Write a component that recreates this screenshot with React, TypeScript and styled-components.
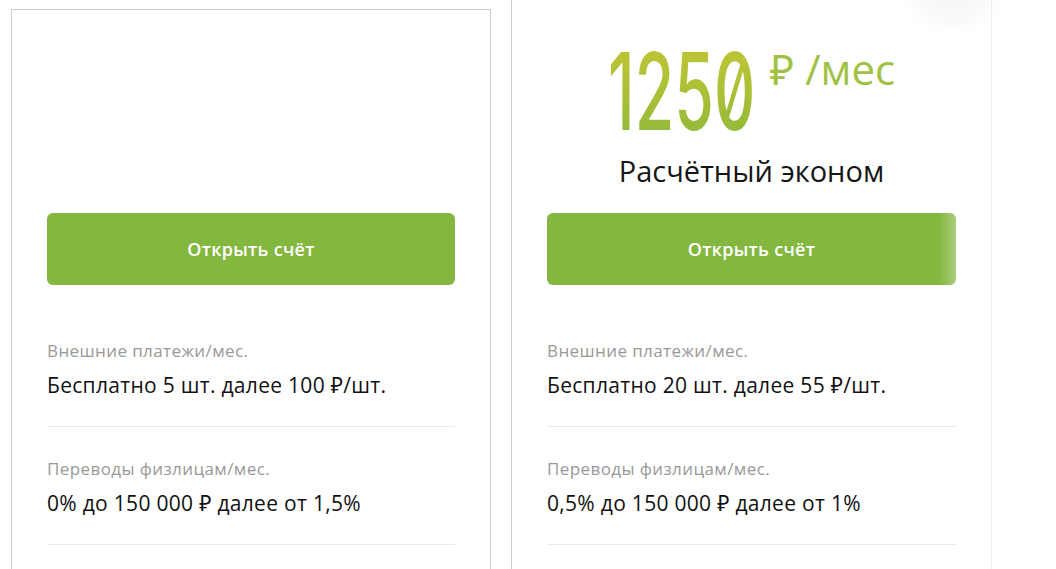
import React from "react";
import styled, { createGlobalStyle } from "styled-components";

const GlobalStyle = createGlobalStyle`
  html, body {
    margin: 0;
    padding: 0;
    background: #ffffff;
  }
  body {
    font-family: "Open Sans", "Noto Sans", "Liberation Sans", sans-serif;
    color: #111111;
  }
  * { box-sizing: border-box; }
`;

const Page = styled.div`
  position: relative;
  width: 1056px;
  height: 569px;
  overflow: hidden;
  background: #ffffff;
`;

const Cards = styled.div`
  display: flex;
  align-items: flex-start;
  gap: 20px;
  padding-left: 11px;
`;

const Card = styled.section<{ $active?: boolean }>`
  width: ${(p) => (p.$active ? 481 : 480)}px;
  padding: 0 35px 40px;
  border: 1px solid #cdcdcd;
  background: #ffffff;
  margin-top: ${(p) => (p.$active ? 0 : 9)}px;
  ${(p) =>
    p.$active &&
    `
    border-top: 0;
    border-right-color: #f1f1f1;
    padding-top: 10px;
  `}
`;

const Header = styled.header`
  height: 203px;
  padding-top: 28px;
  display: flex;
  flex-direction: column;
  align-items: center;
`;

const PriceLine = styled.div`
  display: flex;
  align-items: flex-start;
  justify-content: center;
  gap: 21px;
`;

const Amount = styled.span`
  display: inline-block;
  width: 141px;
  height: 107px;
  white-space: nowrap;
`;

const AmountGlyphs = styled.span`
  display: inline-block;
  font-family: "Inter", "Liberation Sans", sans-serif;
  font-size: 107px;
  line-height: 107px;
  font-weight: 500;
  font-feature-settings: "zero" 1;
  letter-spacing: 0;
  transform: scaleX(0.6);
  transform-origin: left top;
  background: linear-gradient(180deg, #c3c535 0%, #abc036 50%, #8db83b 100%);
  -webkit-background-clip: text;
  background-clip: text;
  color: transparent;
`;

const Period = styled.span`
  margin-top: 3px;
  font-size: 42px;
  line-height: 56px;
  color: #9fc244;
  white-space: nowrap;
`;

const PlanName = styled.h2`
  margin: 8px 0 0;
  font-size: 29px;
  line-height: 36px;
  font-weight: 400;
  color: #161616;
`;

const OpenButton = styled.button<{ $faded?: boolean }>`
  display: flex;
  align-items: center;
  justify-content: center;
  width: 100%;
  height: 72px;
  border: 0;
  border-radius: 6px;
  margin: 0 0 24px;
  padding: 0;
  font-family: inherit;
  font-size: 18px;
  font-weight: 600;
  letter-spacing: 0.3px;
  color: #ffffff;
  cursor: pointer;
  background: ${(p) =>
    p.$faded
      ? "linear-gradient(90deg, #84b740 0%, #84b740 calc(100% - 17px), #8bbb4a calc(100% - 14px), #aacd7e 100%)"
      : "#84b740"};
`;

const Row = styled.div`
  padding: 30px 0 26px;
  border-bottom: 1px solid #e9e9ee;
`;

const Label = styled.div`
  font-size: 17px;
  line-height: 24px;
  letter-spacing: 0.4px;
  color: #999999;
`;

const Value = styled.div`
  margin-top: 7px;
  font-size: 21px;
  line-height: 30px;
  letter-spacing: 0.3px;
  color: #111111;
`;

const ShadowBlob = styled.div`
  position: absolute;
  left: 903px;
  top: -40px;
  width: 100px;
  height: 76px;
  border-radius: 50%;
  background: radial-gradient(closest-side, rgba(0, 0, 0, 0.035), rgba(0, 0, 0, 0.022) 55%, rgba(0, 0, 0, 0));
  pointer-events: none;
`;

type Plan = {
  price?: string;
  name?: string;
  active?: boolean;
  rows: { label: string; value: string }[];
};

const plans: Plan[] = [
  {
    rows: [
      { label: "Внешние платежи/мес.", value: "Бесплатно 5 шт. далее 100 ₽/шт." },
      { label: "Переводы физлицам/мес.", value: "0% до 150 000 ₽ далее от 1,5%" },
    ],
  },
  {
    price: "1250",
    name: "Расчётный эконом",
    active: true,
    rows: [
      { label: "Внешние платежи/мес.", value: "Бесплатно 20 шт. далее 55 ₽/шт." },
      { label: "Переводы физлицам/мес.", value: "0,5% до 150 000 ₽ далее от 1%" },
    ],
  },
];

export default function App() {
  return (
    <Page>
      <GlobalStyle />
      <Cards>
        {plans.map((plan, i) => (
          <Card key={i} $active={plan.active}>
            <Header>
              {plan.price && (
                <>
                  <PriceLine>
                    <Amount>
                      <AmountGlyphs>{plan.price}</AmountGlyphs>
                    </Amount>
                    <Period>₽ /мес</Period>
                  </PriceLine>
                  <PlanName>{plan.name}</PlanName>
                </>
              )}
            </Header>
            <OpenButton $faded={plan.active}>Открыть счёт</OpenButton>
            {plan.rows.map((r) => (
              <Row key={r.label}>
                <Label>{r.label}</Label>
                <Value>{r.value}</Value>
              </Row>
            ))}
          </Card>
        ))}
      </Cards>
      <ShadowBlob />
    </Page>
  );
}
